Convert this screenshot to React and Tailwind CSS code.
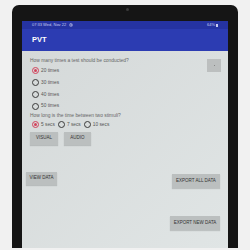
import { Settings } from "lucide-react";

function Radio({ checked, label }) {
  return (
    <div className="flex items-center gap-[2px]">
      <span
        className={
          "flex h-[7px] w-[7px] items-center justify-center rounded-full border-[1px] " +
          (checked ? "border-[#d2435c]" : "border-[#3a3a3a]")
        }
      >
        {checked && <span className="h-[3px] w-[3px] rounded-full bg-[#d2435c]" />}
      </span>
      <span className="text-[4.8px] text-[#555]">{label}</span>
    </div>
  );
}

function Btn({ children, className = "" }) {
  return (
    <div
      className={
        "flex items-center justify-center bg-[#bbbfbf] text-[4.5px] font-medium text-[#333] shadow-[0_1px_1px_rgba(0,0,0,0.15)] " +
        className
      }
    >
      {children}
    </div>
  );
}

export default function App() {
  return (
    <div
      className="relative h-[250px] w-[250px] overflow-hidden bg-[#f1f1f1]"
      style={{ fontFamily: '"Liberation Sans", Arial, sans-serif' }}
    >
      {/* tablet body */}
      <div className="ml-[12px] mt-[5px] flex h-[243px] w-[226px] flex-col rounded-t-[7px] bg-[#151515] px-[10px] pt-[16px]">
        <div className="absolute left-[126px] top-[8px] h-[3px] w-[3px] rounded-full bg-[#3a3a3a]" />

        {/* screen */}
        <div className="flex flex-1 flex-col overflow-hidden">
          <div className="flex h-[8px] items-center justify-between bg-[#2533a2] px-[10px] text-[4px] text-[#c9cdf0]">
            <span className="flex items-center gap-[1px]">
              07:33 Wed, Nov 22 <Settings size={4} strokeWidth={3} className="ml-[2px]" />
            </span>
            <span className="flex items-center gap-[1px]">
              64% <span className="h-[3px] w-[2px] bg-[#c9cdf0]" />
            </span>
          </div>
          <div className="flex h-[22px] items-center bg-[#2c3cb2] px-[10px] text-[7.5px] font-bold text-white">
            PVT
          </div>

          <div className="relative flex flex-1 flex-col bg-gradient-to-br from-[#d5d9d9] to-[#e0e5e5] px-[8px] pt-[6px]">
            <div className="absolute right-[7px] top-[8px] flex h-[13px] w-[14px] items-center justify-center bg-[#bcbfbf]">
              <span className="h-[1px] w-[1px] bg-[#888]" />
            </div>

            <div className="text-[4.9px] text-[#666]">How many times a test should be conducted?</div>
            <div className="mt-[3px] flex flex-col gap-[4.5px] pl-[2px]">
              <Radio checked label="20 times" />
              <Radio label="30 times" />
              <Radio label="40 times" />
              <Radio label="50 times" />
            </div>

            <div className="mt-[2px] text-[4.9px] text-[#666]">How long is the time between two stimuli?</div>
            <div className="mt-[2px] flex items-center gap-[3px] pl-[2px]">
              <Radio checked label="5 secs" />
              <Radio label="7 secs" />
              <Radio label="10 secs" />
            </div>

            <div className="mt-[4px] flex gap-[6px]">
              <Btn className="h-[13px] w-[28px]">VISUAL</Btn>
              <Btn className="h-[13px] w-[27px]">AUDIO</Btn>
            </div>

            <div className="mt-[27px] flex items-start justify-between">
              <Btn className="-ml-[4px] h-[13px] w-[31px]">VIEW DATA</Btn>
              <Btn className="mt-[2px] h-[14px] w-[48px]">EXPORT ALL DATA</Btn>
            </div>

            <div className="mt-[28px] flex justify-end">
              <Btn className="h-[14px] w-[50px]">EXPORT NEW DATA</Btn>
            </div>
          </div>
        </div>
      </div>
    </div>
  );
}
